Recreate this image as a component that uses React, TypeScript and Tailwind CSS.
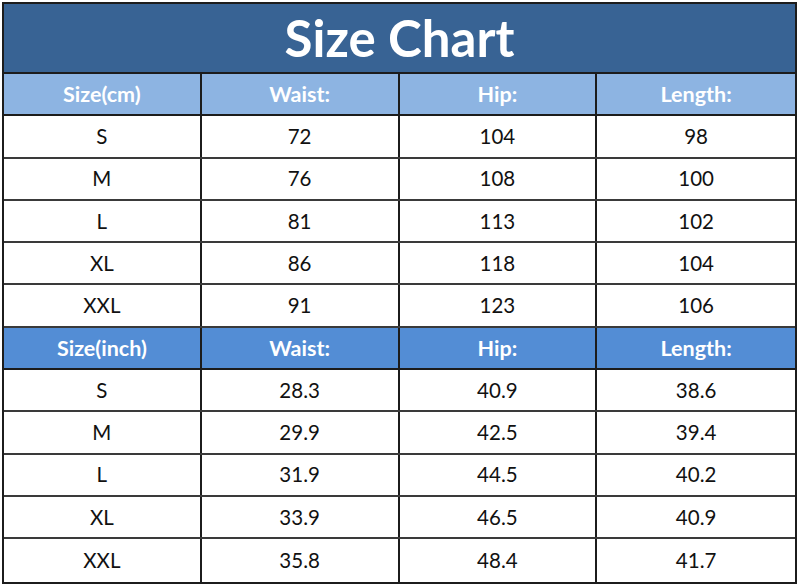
const cm = [
  ["S", "72", "104", "98"],
  ["M", "76", "108", "100"],
  ["L", "81", "113", "102"],
  ["XL", "86", "118", "104"],
  ["XXL", "91", "123", "106"],
];

const inch = [
  ["S", "28.3", "40.9", "38.6"],
  ["M", "29.9", "42.5", "39.4"],
  ["L", "31.9", "44.5", "40.2"],
  ["XL", "33.9", "46.5", "40.9"],
  ["XXL", "35.8", "48.4", "41.7"],
];

function HeaderRow({ first, tone }: { first: string; tone: string }) {
  const cols = [first, "Waist:", "Hip:", "Length:"];
  return (
    <div className={`grid h-[42.3px] grid-cols-4 border-b-2 border-[#1c1c1c] ${tone}`}>
      {cols.map((c, i) => (
        <div
          key={c}
          className={`flex items-center justify-center text-[21.5px] font-bold text-white ${i < 3 ? "border-r-2 border-[#1c1c1c]" : ""}`}
        >
          {c}
        </div>
      ))}
    </div>
  );
}

function DataRow({ cells, last }: { cells: string[]; last?: boolean }) {
  return (
    <div className={`grid h-[42.3px] grid-cols-4 bg-white ${last ? "" : "border-b-2 border-[#3a3a3a]"}`}>
      {cells.map((c, i) => (
        <div
          key={i}
          className={`flex items-center justify-center text-[20.5px] text-[#111] ${i < 3 ? "border-r-2 border-[#1c1c1c]" : ""}`}
        >
          {c}
        </div>
      ))}
    </div>
  );
}

export default function App() {
  return (
    <div className="h-[585px] w-[800px] bg-white pl-[2px] pt-[2px]" style={{ fontFamily: "Lato, 'Open Sans', sans-serif" }}>
      <div className="w-[795px] border-2 border-[#1c1c1c]">
        <div className="flex h-[70px] items-center justify-center border-b-2 border-[#1c1c1c] bg-[#386394] text-[51px] font-bold text-white">
          Size Chart
        </div>
        <HeaderRow first="Size(cm)" tone="bg-[#8db4e2]" />
        {cm.map((r) => (
          <DataRow key={r[0]} cells={r} />
        ))}
        <HeaderRow first="Size(inch)" tone="bg-[#538dd5]" />
        {inch.map((r, i) => (
          <DataRow key={r[0]} cells={r} last={i === inch.length - 1} />
        ))}
      </div>
    </div>
  );
}
